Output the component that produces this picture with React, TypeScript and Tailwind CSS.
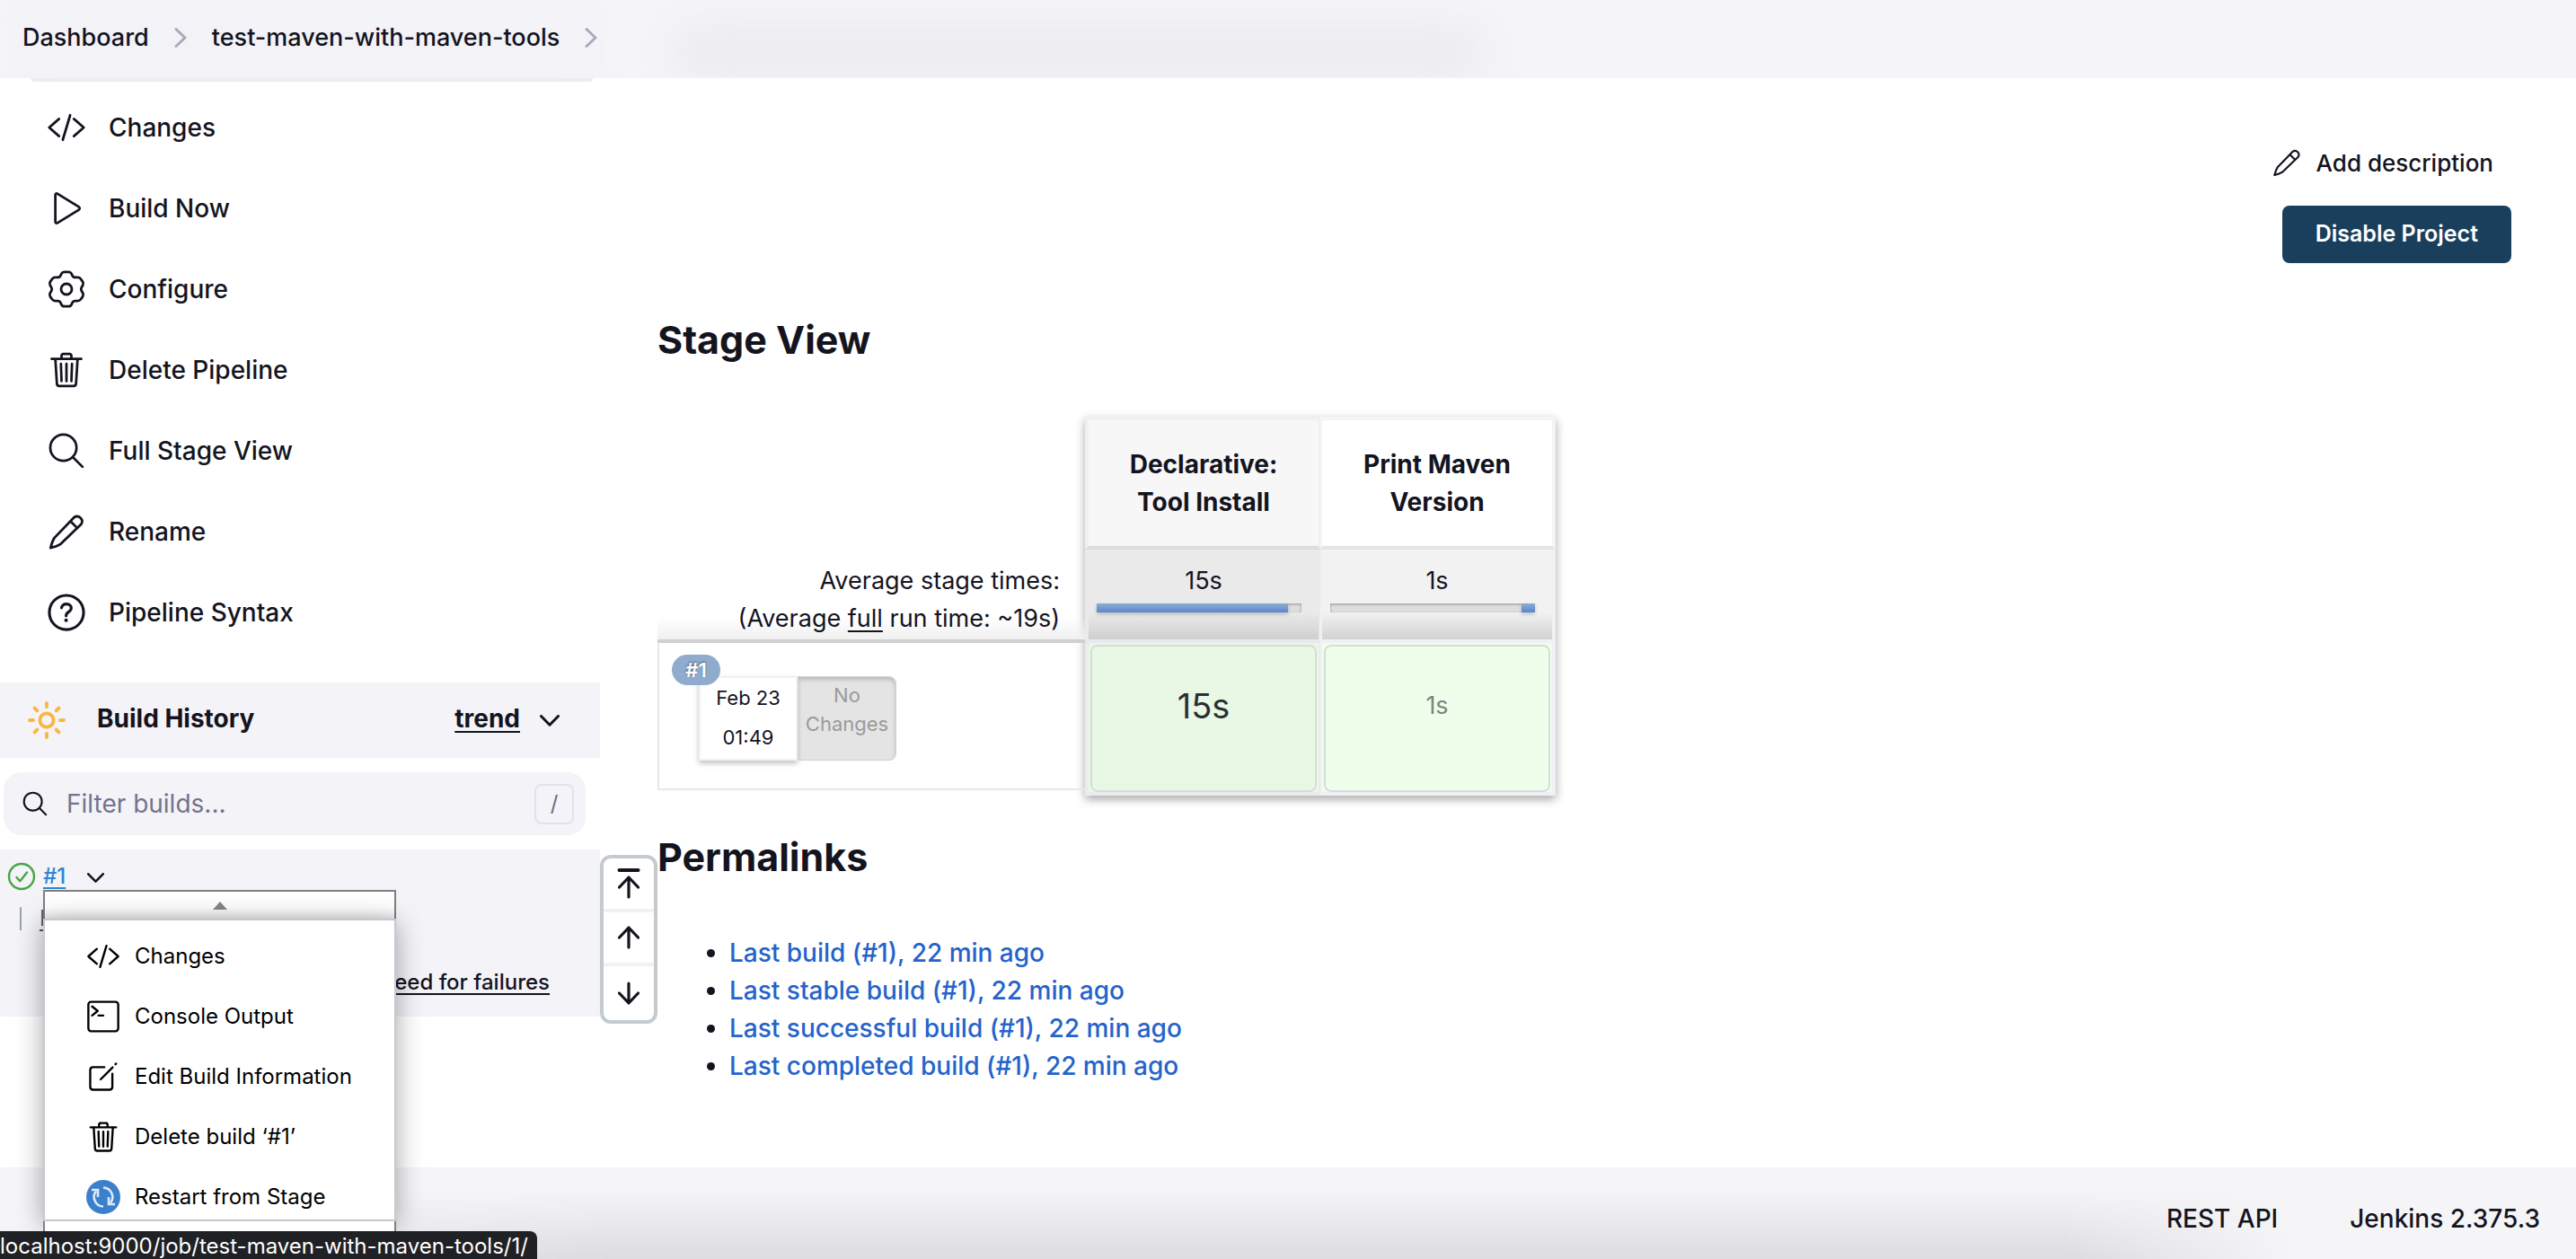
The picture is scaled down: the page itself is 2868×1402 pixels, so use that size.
import type { ReactNode } from "react";

type IconProps = { className?: string };

function Line({ className = "size-11", width = 32, children }: IconProps & { width?: number; children: ReactNode }) {
  return (
    <svg
      viewBox="0 0 512 512"
      className={`shrink-0 ${className}`}
      fill="none"
      stroke="currentColor"
      strokeWidth={width}
      strokeLinecap="round"
      strokeLinejoin="round"
      aria-hidden="true"
    >
      {children}
    </svg>
  );
}

const CodeIcon = ({ className }: IconProps) => (
  <Line className={className}>
    <path d="M160 368L32 256l128-112M352 368l128-112-128-112M304 96l-96 320" />
  </Line>
);

const PlayIcon = ({ className }: IconProps) => (
  <Line className={className}>
    <path d="M112 81v350c0 14 13 21 25 15l280-172c14-8 14-28 0-36L137 66c-12-6-25 1-25 15z" />
  </Line>
);

const gearPoints: [number, number][] = [
  [17.4, 2.8], [26.6, 2.8], [29.6, 9], [36.6, 8.8], [41.4, 15.6], [37.6, 22],
  [41.4, 28.4], [36.6, 35.2], [29.6, 35], [26.6, 41.2], [17.4, 41.2], [14.4, 35],
  [7.4, 35.2], [2.6, 28.4], [6.4, 22], [2.6, 15.6], [7.4, 8.8], [14.4, 9],
];

function roundedPath(points: [number, number][], radius: number) {
  const toward = (from: [number, number], to: [number, number]) => {
    const length = Math.hypot(to[0] - from[0], to[1] - from[1]);
    return `${from[0] + ((to[0] - from[0]) * radius) / length} ${from[1] + ((to[1] - from[1]) * radius) / length}`;
  };
  return (
    points
      .map((point, i) => {
        const previous = points[(i + points.length - 1) % points.length];
        const next = points[(i + 1) % points.length];
        return `${i === 0 ? "M" : "L"}${toward(point, previous)}Q${point[0]} ${point[1]} ${toward(point, next)}`;
      })
      .join("") + "z"
  );
}

const GearIcon = () => (
  <svg viewBox="0 0 44 44" className="size-11 shrink-0" fill="none" stroke="currentColor" strokeWidth="2.8" strokeLinejoin="round" aria-hidden="true">
    <path d={roundedPath(gearPoints, 2.4)} />
    <circle cx="22" cy="22" r="6" />
  </svg>
);

const TrashIcon = ({ className }: IconProps) => (
  <Line className={className}>
    <path d="M112 112l20 320c.95 18.49 14.4 32 32 32h184c17.67 0 30.87-13.51 32-32l20-320M64 112h384M192 112V72a23.93 23.93 0 0124-24h80a23.93 23.93 0 0124 24v40M256 176v224M184 176l8 224M328 176l-8 224" />
  </Line>
);

const SearchIcon = ({ className, width }: IconProps & { width?: number }) => (
  <Line className={className} width={width}>
    <circle cx="216" cy="216" r="170" />
    <path d="M338 338L464 464" />
  </Line>
);

const PencilIcon = ({ className = "size-11" }: IconProps) => (
  <svg
    viewBox="-7 -7 102 102"
    className={`shrink-0 ${className}`}
    fill="none"
    stroke="currentColor"
    strokeWidth="6.5"
    strokeLinecap="round"
    strokeLinejoin="round"
    aria-hidden="true"
  >
    <path d="M3 86C6 74 9 66 13 60L64 7a13 13 0 0 1 18 18L29 76C23 80 16 83 3 86zM54 17L72 35" />
  </svg>
);

const HelpIcon = ({ className }: IconProps) => (
  <Line className={className} width={36}>
    <circle cx="256" cy="256" r="222" />
    <path d="M192 196s1-19 21-36c12-10 27-13 43-13 12 0 23 2 30 5 11 5 32 18 32 46 0 29-18 42-40 56s-27 31-27 47" />
    <circle cx="251" cy="358" r="24" fill="currentColor" stroke="none" />
  </Line>
);

const TerminalIcon = ({ className }: IconProps) => (
  <Line className={className}>
    <rect x="32" y="36" width="448" height="440" rx="40" />
    <path d="M88 104l84 68-84 68M184 240h72" />
  </Line>
);

const EditIcon = ({ className }: IconProps) => (
  <Line className={className}>
    <path d="M272 112H104c-26 0-44 18-44 44v252c0 26 18 44 44 44h244c26 0 44-18 44-44V212" />
    <path d="M216 296L396 116M438 70l10-10" />
  </Line>
);

const RestartIcon = ({ className }: IconProps) => (
  <svg viewBox="0 0 38 38" className={`shrink-0 ${className}`} aria-hidden="true">
    <circle cx="19" cy="19" r="19" fill="#3c80cc" />
    <g fill="none" stroke="#dcebfa" strokeWidth="2.6">
      <path d="M19 29.5A10.5 10.5 0 0 1 11 12.5M19 8.500A10.500 10.500 0 0 1 27 25.500" />
      <path d="M6 11h7v8M32 27h-7v-8" />
    </g>
  </svg>
);

const SunIcon = () => (
  <svg viewBox="0 0 44 44" className="size-11 shrink-0" fill="none" stroke="#fcb53f" strokeWidth="3.8" strokeLinecap="round" aria-hidden="true">
    <circle cx="22" cy="22" r="7.600" />
    <path d="M22 3v4M22 37v4M3 22h4M37 22h4M8.600 8.600l2.800 2.800M32.600 32.600l2.800 2.800M8.600 35.400l2.800-2.800M32.600 11.400l2.800-2.800" />
  </svg>
);

const CheckIcon = () => (
  <svg viewBox="0 0 32 32" className="size-8 shrink-0" fill="none" stroke="#46a546" strokeWidth="2.4" strokeLinecap="round" strokeLinejoin="round" aria-hidden="true">
    <circle cx="16" cy="16" r="14" />
    <path d="M10.500 17l3.800 4.200L22 11.500" />
  </svg>
);

const ChevronDown = ({ className = "w-[22px]" }: IconProps) => (
  <svg viewBox="0 0 22 13" className={className} fill="none" stroke="currentColor" strokeWidth="3" strokeLinecap="round" strokeLinejoin="round" aria-hidden="true">
    <path d="M1.500 1.500L11 11.200L20.500 1.500" />
  </svg>
);

const ChevronRight = () => (
  <svg viewBox="0 0 14 22" className="h-[22px] w-[14px] shrink-0 text-[#a9a9bb]" fill="none" stroke="currentColor" strokeWidth="3" strokeLinecap="round" strokeLinejoin="round" aria-hidden="true">
    <path d="M2 1.500L12 11L2 20.500" />
  </svg>
);

const ArrowIcon = ({ kind }: { kind: "top" | "up" | "down" }) => (
  <svg viewBox="0 0 28 36" className="h-9 w-7" fill="none" stroke="currentColor" strokeWidth="3.200" strokeLinecap="round" strokeLinejoin="round" aria-hidden="true">
    {kind === "top" && <path d="M3.500 3h21" strokeWidth="4" />}
    {kind === "top" && <path d="M14 33V12M3.500 22L14 11l10.500 11" />}
    {kind === "up" && <path d="M14 29V8M3.500 18L14 7l10.500 11" />}
    {kind === "down" && <path d="M14 7v21M3.500 18L14 29l10.500-11" />}
  </svg>
);

const tasks = [
  { label: "Changes", icon: <CodeIcon /> },
  { label: "Build Now", icon: <PlayIcon /> },
  { label: "Configure", icon: <GearIcon /> },
  { label: "Delete Pipeline", icon: <TrashIcon /> },
  { label: "Full Stage View", icon: <SearchIcon /> },
  { label: "Rename", icon: <PencilIcon /> },
  { label: "Pipeline Syntax", icon: <HelpIcon /> },
];

const menuItems = [
  { label: "Changes", icon: <CodeIcon className="size-[38px]" /> },
  { label: "Console Output", icon: <TerminalIcon className="size-[38px]" /> },
  { label: "Edit Build Information", icon: <EditIcon className="size-[38px]" /> },
  { label: "Delete build ‘#1’", icon: <TrashIcon className="size-[38px]" /> },
  { label: "Restart from Stage", icon: <RestartIcon className="size-[38px]" /> },
];

const permalinks = [
  "Last build (#1), 22 min ago",
  "Last stable build (#1), 22 min ago",
  "Last successful build (#1), 22 min ago",
  "Last completed build (#1), 22 min ago",
];

function Breadcrumbs() {
  return (
    <header className="relative h-[87px] shrink-0 overflow-hidden bg-[#f5f5f8]">
      <div className="absolute top-2 left-4 h-24 w-[650px] rounded-3xl bg-[#f2f2f7] blur-md" />
      <div className="absolute top-9 left-[750px] h-11 w-[900px] rounded-full bg-[#e9e9ed] blur-xl" />
      <nav aria-label="Breadcrumb" className="relative flex h-[84px] items-center pl-[25px] text-[27px] font-medium">
        <a href="#dashboard">Dashboard</a>
        <span className="px-7">
          <ChevronRight />
        </span>
        <a href="#job">test-maven-with-maven-tools</a>
        <span className="pl-7">
          <ChevronRight />
        </span>
      </nav>
    </header>
  );
}

function BuildMenu() {
  return (
    <div className="absolute top-[45px] left-12 z-20 w-[393px] text-black">
      <div className="flex h-8 items-center justify-center border-2 border-b-0 border-[#808080] bg-gradient-to-b from-white from-60% to-[#ececec]">
        <svg viewBox="0 0 16 9" className="w-4" aria-hidden="true">
          <path d="M8 0l8 9H0z" fill="#808080" />
        </svg>
      </div>
      <ul className="h-[337px] overflow-hidden border-2 border-[#c3cbcf] bg-white pt-[6px] shadow-[0_4px_28px_rgba(0,0,0,0.35)]">
        {menuItems.map((item) => (
          <li key={item.label}>
            <a href="#menu" className="flex h-[67px] items-center gap-4 pl-[46px] text-2xl whitespace-nowrap">
              {item.icon}
              {item.label}
            </a>
          </li>
        ))}
      </ul>
      <div className="h-8 border-x-2 border-[#808080] bg-white" />
    </div>
  );
}

function ScrollControls() {
  return (
    <div className="absolute top-[6px] left-[668px] z-10 flex w-16 flex-col divide-y-4 divide-[#f1f1f1] rounded-xl border-4 border-[#c3cbcf] bg-white">
      <button aria-label="Newest builds" className="flex h-[60px] items-center justify-center">
        <ArrowIcon kind="top" />
      </button>
      <button aria-label="Newer builds" className="flex h-[60px] items-center justify-center">
        <ArrowIcon kind="up" />
      </button>
      <button aria-label="Older builds" className="flex h-[60px] items-center justify-center">
        <ArrowIcon kind="down" />
      </button>
    </div>
  );
}

function Sidebar() {
  return (
    <aside className="w-[668px] shrink-0">
      <div className="mr-2 ml-[34px] h-1 rounded-b-xl bg-[#ececf2]" />
      <ul className="pt-[6px]">
        {tasks.map((task) => (
          <li key={task.label}>
            <a href="#task" className="flex h-[90px] items-center gap-[25px] pl-[52px] text-[28px] font-medium">
              {task.icon}
              {task.label}
            </a>
          </li>
        ))}
      </ul>

      <section>
        <div className="mt-[33px] flex h-[84px] items-center bg-[#f3f3f8] pr-[45px] pl-[30px] text-[28px] font-bold">
          <SunIcon />
          <h2 className="ml-[34px] flex-1 pb-1">Build History</h2>
          <a href="#trend" className="pb-1 underline decoration-2 underline-offset-4">
            trend
          </a>
          <button aria-label="Toggle build history" className="ml-[22px]">
            <ChevronDown />
          </button>
        </div>

        <label className="mt-4 mr-4 ml-1 flex h-[70px] items-center rounded-[20px] bg-[#f3f3f8] pr-[13px] pl-5">
          <SearchIcon className="size-[30px]" width={36} />
          <input
            type="text"
            aria-label="Filter builds"
            placeholder="Filter builds..."
            className="mx-5 min-w-0 flex-1 bg-transparent text-[28px] outline-none placeholder:text-[#73738c]"
          />
          <kbd className="flex h-[45px] w-11 items-center justify-center rounded-lg border-2 border-[#e2e2ec] font-[Inter] text-2xl text-[#6b6b82]">/</kbd>
        </label>

        <div className="relative mt-4 h-[186px] bg-[#f3f3f8]">
          <div className="flex h-[60px] items-center pl-2">
            <CheckIcon />
            <a href="#build" className="ml-2 text-2xl font-medium text-[#2f86d3] underline decoration-2 underline-offset-4">
              #1
            </a>
            <button aria-label="Build actions" className="mt-1 ml-6">
              <ChevronDown className="w-[19px]" />
            </button>
          </div>
          <div className="flex h-[34px] items-center pl-[22px]">
            <span className="h-[26px] w-[2px] bg-[#9aa3b0]" />
            <a href="#date" className="ml-5 text-2xl whitespace-nowrap text-[#55556a] underline decoration-2 underline-offset-4">
              Feb 23, 2023, 1:49 AM
            </a>
          </div>
          <div className="flex justify-end pt-[38px] pr-14">
            <a href="#feed" className="text-2xl font-medium underline decoration-2 underline-offset-4">
              Atom feed for failures
            </a>
          </div>
          <BuildMenu />
          <ScrollControls />
        </div>
      </section>
    </aside>
  );
}

const bar = "flex h-[10px] w-[228px] bg-[#dedede] shadow-[inset_0_1px_3px_rgba(0,0,0,0.35)]";
const fill = "h-full bg-gradient-to-b from-[#8cacd2] to-[#5a86cf] shadow-[0_2px_4px_rgba(0,0,0,0.2)]";

function StageView() {
  return (
    <div className="relative mt-[58px] w-[1000px]">
      <div className="absolute inset-y-0 right-0 left-[476px] border-4 border-[#f0f0f6] shadow-[0_4px_10px_rgba(0,0,0,0.35)]" />
      <table className="relative w-full table-fixed border-separate border-spacing-0 text-[27px]">
        <colgroup>
          <col className="w-[476px]" />
          <col />
          <col />
        </colgroup>
        <thead>
          <tr className="h-[148px]">
            <td />
            <th scope="col" className="border-4 border-r-2 border-[#f0f0f4] border-b-[#dcdcdc] bg-[#f7f7f7] text-[28px] leading-[42px] font-bold">
              Declarative:
              <br />
              Tool Install
            </th>
            <th scope="col" className="border-4 border-l-2 border-[#f3f3f8] border-b-[#e4e4e4] bg-white text-[28px] leading-[42px] font-bold">
              Print Maven
              <br />
              Version
            </th>
          </tr>
        </thead>
        <tbody>
          <tr className="h-[104px]">
            <th scope="row" className="border-b-4 border-[#d0d0d0] bg-gradient-to-b from-transparent from-75% to-[#f0f0f0] pt-[14px] pr-7 text-right align-top leading-[42px] font-normal">
              Average stage times:
              <br />
              (Average <span className="underline decoration-2 underline-offset-4">full</span> run time: ~19s)
            </th>
            <td className="border-4 border-t-0 border-r-2 border-[#e9e9ee] bg-gradient-to-b from-[#eaeaea] from-70% to-[#cfcfcf] pt-[14px] pl-[9px] align-top">
              <div className="pr-[9px] text-center leading-[42px]">15s</div>
              <div className={`mt-1 ${bar}`}>
                <div className={`w-[213px] ${fill}`} />
              </div>
            </td>
            <td className="border-4 border-t-0 border-l-2 border-[#f1f1f5] bg-gradient-to-b from-[#f2f2f2] from-70% to-[#d2d2d2] pt-[14px] pl-[9px] align-top">
              <div className="pr-[9px] text-center leading-[42px]">1s</div>
              <div className={`mt-1 justify-end ${bar}`}>
                <div className={`w-[15px] ${fill}`} />
              </div>
            </td>
          </tr>
          <tr className="h-[170px]">
            <th scope="row" className="p-0 align-top font-normal">
              <div className="relative flex h-[164px] border-b-2 border-l-2 border-[#e8e8e8] pt-[37px] pl-11">
                <div className="h-[94px] w-[110px] border-2 border-[#f2f2f7] bg-white text-center text-[22px] leading-[44px] shadow-[0_3px_6px_rgba(0,0,0,0.25)]">
                  <div>Feb 23</div>
                  <div>01:49</div>
                </div>
                <div className="h-[94px] w-[110px] rounded-r-lg border border-[#d2d2d2] bg-[#e4e4e4] pt-1 text-center text-[22px] leading-8 text-[#9a9a9a] shadow-[inset_0_3px_4px_rgba(0,0,0,0.18)]">
                  No
                  <br />
                  Changes
                </div>
                <span className="absolute top-[13px] left-[14px] flex h-[34px] w-[54px] items-center justify-center rounded-full bg-[#8facce] text-[22px] font-semibold text-white [text-shadow:0_-1px_2px_rgba(0,0,0,0.5)]">
                  #1
                </span>
              </div>
            </th>
            <td className="border-4 border-t-0 border-r-2 border-[#ececf0] bg-[#e8f8e4] p-[2px] pb-0">
              <div className="flex h-[164px] items-center justify-center rounded-lg border-2 border-[#d8dcd8] pb-7 text-[38px] text-[#2b2e35]">15s</div>
            </td>
            <td className="border-4 border-t-0 border-l-2 border-[#f0f0f6] bg-[#effeeb] p-[2px] pb-0">
              <div className="flex h-[164px] items-center justify-center rounded-lg border-2 border-[#d8dcd8] pb-7 text-[#7e857f]">1s</div>
            </td>
          </tr>
        </tbody>
      </table>
    </div>
  );
}

export default function App() {
  return (
    <div className="relative flex min-h-screen flex-col overflow-hidden bg-white font-[Inter,sans-serif] text-[#14141f]">
      <Breadcrumbs />
      <div className="flex flex-1">
        <Sidebar />
        <main className="min-w-0 flex-1 pr-[72px] pl-16">
          <div className="flex flex-col items-end pt-[72px]">
            <a href="#description" className="flex h-11 items-center gap-4 pr-5 text-[26px] font-medium">
              <PencilIcon className="size-[34px]" />
              Add description
            </a>
            <button className="mt-[26px] h-16 rounded-lg bg-[#1a3f5c] px-[37px] text-[25px] font-semibold text-white">Disable Project</button>
          </div>
          <h2 className="mt-[57px] text-[43px] leading-[56px] font-bold">Stage View</h2>
          <StageView />
          <h2 className="mt-10 text-[43px] leading-[56px] font-bold">Permalinks</h2>
          <ul className="mt-[58px] list-disc pl-20 text-[28px] leading-[42px]">
            {permalinks.map((text) => (
              <li key={text}>
                <a href="#permalink" className="font-medium text-[#2563cb]">
                  {text}
                </a>
              </li>
            ))}
          </ul>
        </main>
      </div>
      <footer className="relative flex h-[102px] shrink-0 items-center justify-end gap-20 bg-[#f5f5f8] pr-10 text-[28px] font-medium">
        <div className="absolute inset-x-0 bottom-0 h-[76px] bg-gradient-to-b from-transparent to-black/10 [mask-image:linear-gradient(to_right,transparent,black_24%,black_80%,transparent_89%)]" />
        <a href="#api" className="relative pt-3">
          REST API
        </a>
        <a href="#version" className="relative pt-3">
          Jenkins 2.375.3
        </a>
      </footer>
      <div className="absolute bottom-0 left-0 z-30 flex h-[31px] items-end rounded-tr-lg bg-[#202124] pr-[10px] text-2xl leading-7 whitespace-nowrap text-white">
        localhost:9000/job/test-maven-with-maven-tools/1/
      </div>
    </div>
  );
}
